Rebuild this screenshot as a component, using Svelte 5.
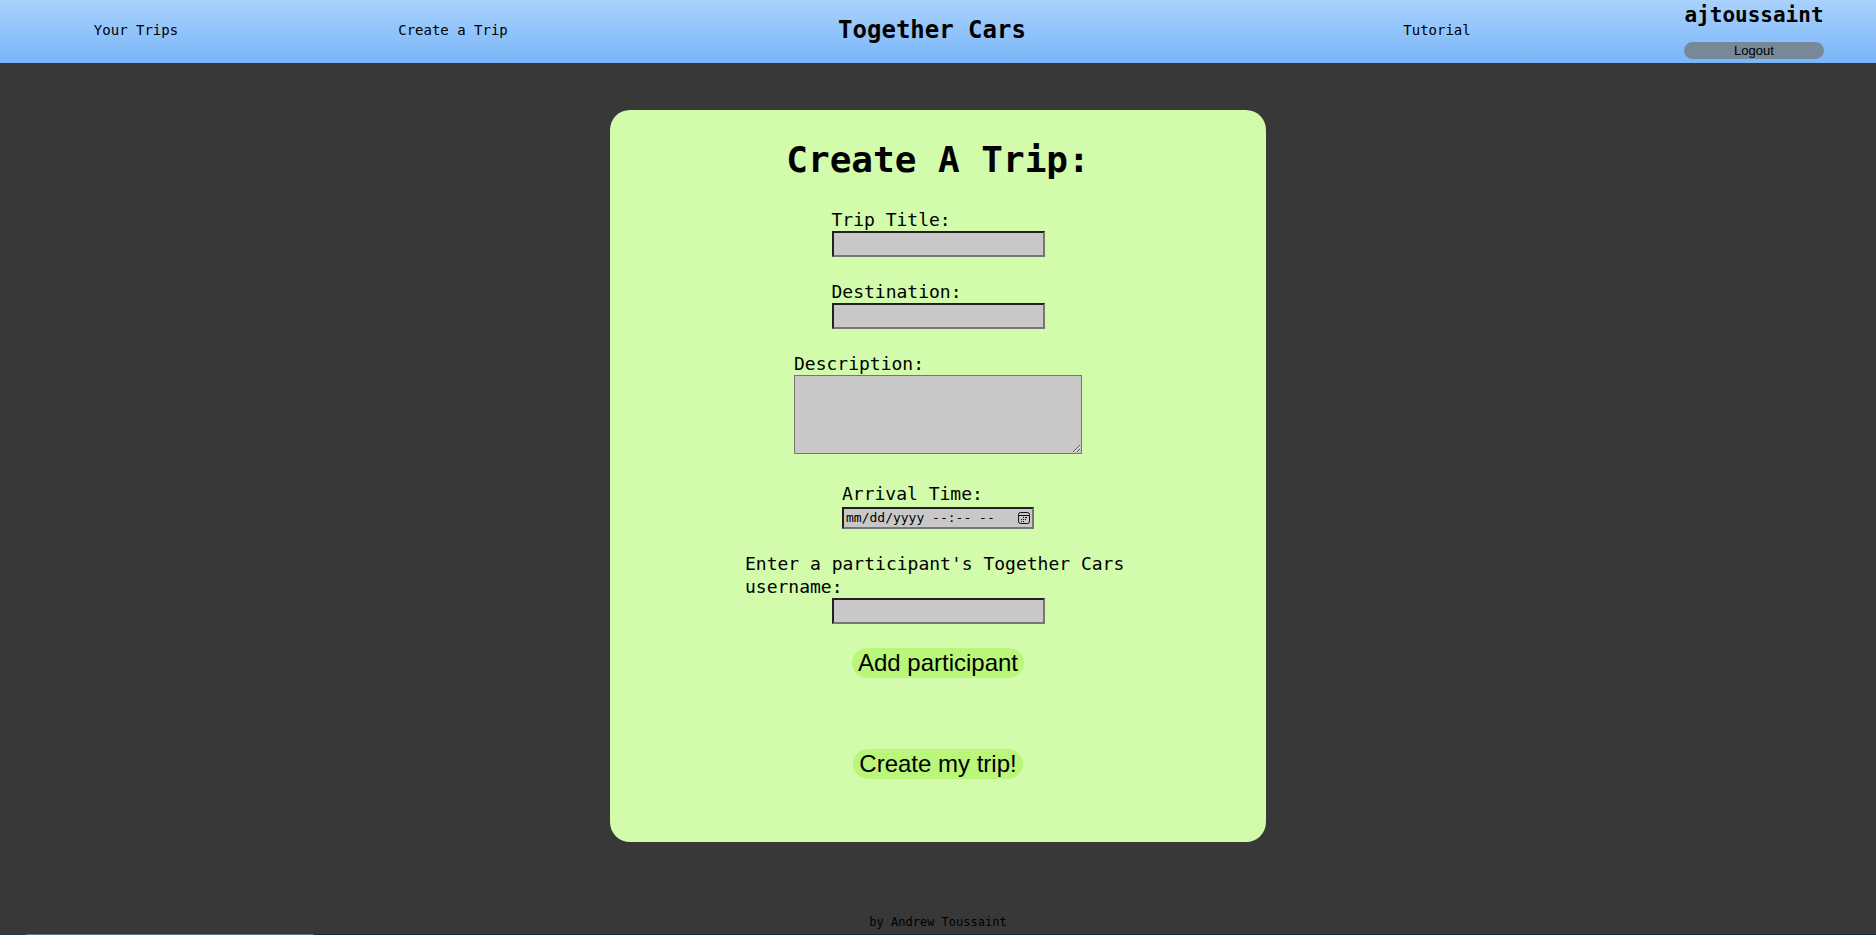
<script>
  let title = $state('');
  let destination = $state('');
  let description = $state('');
  let arrival = $state('');
  let participant = $state('');
</script>

<div class="page">
  <header>
    <a href="#trips">Your Trips</a>
    <a href="#create">Create a Trip</a>
    <h2>Together Cars</h2>
    <a href="#tutorial">Tutorial</a>
    <div class="user">
      <h3>ajtoussaint</h3>
      <button type="button" class="logout">Logout</button>
    </div>
  </header>

  <main>
    <form class="card" onsubmit={(e) => e.preventDefault()}>
      <h1>Create A Trip:</h1>
      <div class="field">
        <label for="title">Trip Title:</label>
        <input id="title" type="text" bind:value={title} />
      </div>
      <div class="field">
        <label for="destination">Destination:</label>
        <input id="destination" type="text" bind:value={destination} />
      </div>
      <div class="field description">
        <label for="description">Description:</label>
        <textarea id="description" bind:value={description}></textarea>
      </div>
      <div class="field arrival">
        <label for="arrival">Arrival Time:</label>
        <div class="picker">
          <input id="arrival" type="datetime-local" class:empty={!arrival} bind:value={arrival} />
          {#if !arrival}
            <span class="hint" aria-hidden="true">mm/dd/yyyy --:-- --</span>
          {/if}
        </div>
      </div>
      <div class="field participant">
        <label for="participant">Enter a participant's Together Cars username:</label>
        <input id="participant" type="text" bind:value={participant} />
      </div>
      <button type="button" class="action">Add participant</button>
      <button type="submit" class="action create">Create my trip!</button>
    </form>
  </main>

  <footer>by Andrew Toussaint</footer>
  <div class="strip"></div>
</div>

<style>
  :global(body) {
    margin: 0;
    background: #383838;
  }
  .page {
    min-height: 100vh;
    display: flex;
    flex-direction: column;
    font-family: Consolas, 'DejaVu Sans Mono', monospace;
    color: #000;
  }
  header {
    box-sizing: border-box;
    display: grid;
    grid-template-columns: 272fr 362fr 596fr 414fr 220fr;
    align-items: center;
    justify-items: center;
    height: 63px;
    padding: 0 12px 4px 0;
    background: linear-gradient(#a9d2fc, #7ab5f8);
  }
  header a {
    color: #000;
    font-size: 14px;
    line-height: 18px;
    text-decoration: none;
  }
  h1, h2, h3 {
    margin: 0;
    font-weight: bold;
  }
  h2 {
    font-size: 24px;
    line-height: 28px;
  }
  h3 {
    font-size: 21px;
    line-height: 28px;
  }
  .user {
    display: flex;
    flex-direction: column;
    gap: 13px;
  }
  button {
    border: 0;
    color: #000;
    font-family: Arial, 'Liberation Sans', sans-serif;
    cursor: pointer;
  }
  .logout {
    padding: 1px 6px;
    border-radius: 10px;
    background: #778899;
    font-size: 13px;
    line-height: 15px;
  }
  main {
    display: flex;
    justify-content: center;
    padding: 47px 0 0;
  }
  .card {
    box-sizing: border-box;
    width: 35%;
    display: flex;
    flex-direction: column;
    align-items: center;
    padding: 27px 24px 63px;
    border-radius: 20px;
    background: #d2fbab;
  }
  h1 {
    margin-bottom: 25px;
    font-size: 36px;
    line-height: 46px;
  }
  .field {
    display: flex;
    flex-direction: column;
    margin-bottom: 23px;
  }
  label {
    font-size: 18px;
    line-height: 23px;
  }
  input, textarea {
    box-sizing: border-box;
    margin: 0;
    background: #c8c8c8;
    color: #000;
  }
  input {
    width: 213px;
    height: 26px;
    padding: 1px 2px;
    border: 2px inset #767676;
    border-radius: 0;
  }
  textarea {
    width: 288px;
    height: 79px;
    border: 1px solid #767676;
    border-radius: 0;
  }
  .description {
    margin-bottom: 28px;
  }
  .arrival {
    gap: 2px;
  }
  .picker {
    position: relative;
    display: flex;
  }
  .picker input {
    width: 192px;
    height: 22px;
    font-family: Consolas, 'DejaVu Sans Mono', monospace;
    font-size: 13px;
  }
  .picker input.empty::-webkit-datetime-edit {
    opacity: 0;
  }
  .picker input::-webkit-calendar-picker-indicator {
    width: 12px;
    height: 12px;
    margin: 0;
    padding: 0;
    background: url("data:image/svg+xml,%3Csvg xmlns='http://www.w3.org/2000/svg' viewBox='0 0 12 12'%3E%3Crect x='.5' y='.5' width='11' height='11' rx='2' fill='none' stroke='%23111'/%3E%3Cpath d='M1 3.5h10' stroke='%23111'/%3E%3Cpath d='M5 5.5h1M7 5.5h2M3 7.5h1M5 7.5h1M7 7.5h1M3 9.5h1M5 9.5h1' stroke='%23111'/%3E%3C/svg%3E") center / 12px 12px no-repeat;
  }
  .hint {
    position: absolute;
    left: 4px;
    top: 3px;
    font-size: 13px;
    line-height: 16px;
    pointer-events: none;
  }
  .participant {
    max-width: 386px;
    align-items: center;
    margin-bottom: 24px;
  }
  .action {
    padding: 1px 6px;
    border-radius: 15px;
    background: #b9f679;
    font-size: 24px;
    line-height: 28px;
  }
  .create {
    margin-top: 71px;
  }
  footer {
    margin-top: auto;
    padding: 16px 0 4px;
    text-align: center;
    font-size: 12px;
    line-height: 16px;
  }
  .strip {
    height: 1px;
    background: linear-gradient(90deg, #1f3c48 26px, #5f7488 26px 314px, #0c2a40 314px);
  }
</style>
